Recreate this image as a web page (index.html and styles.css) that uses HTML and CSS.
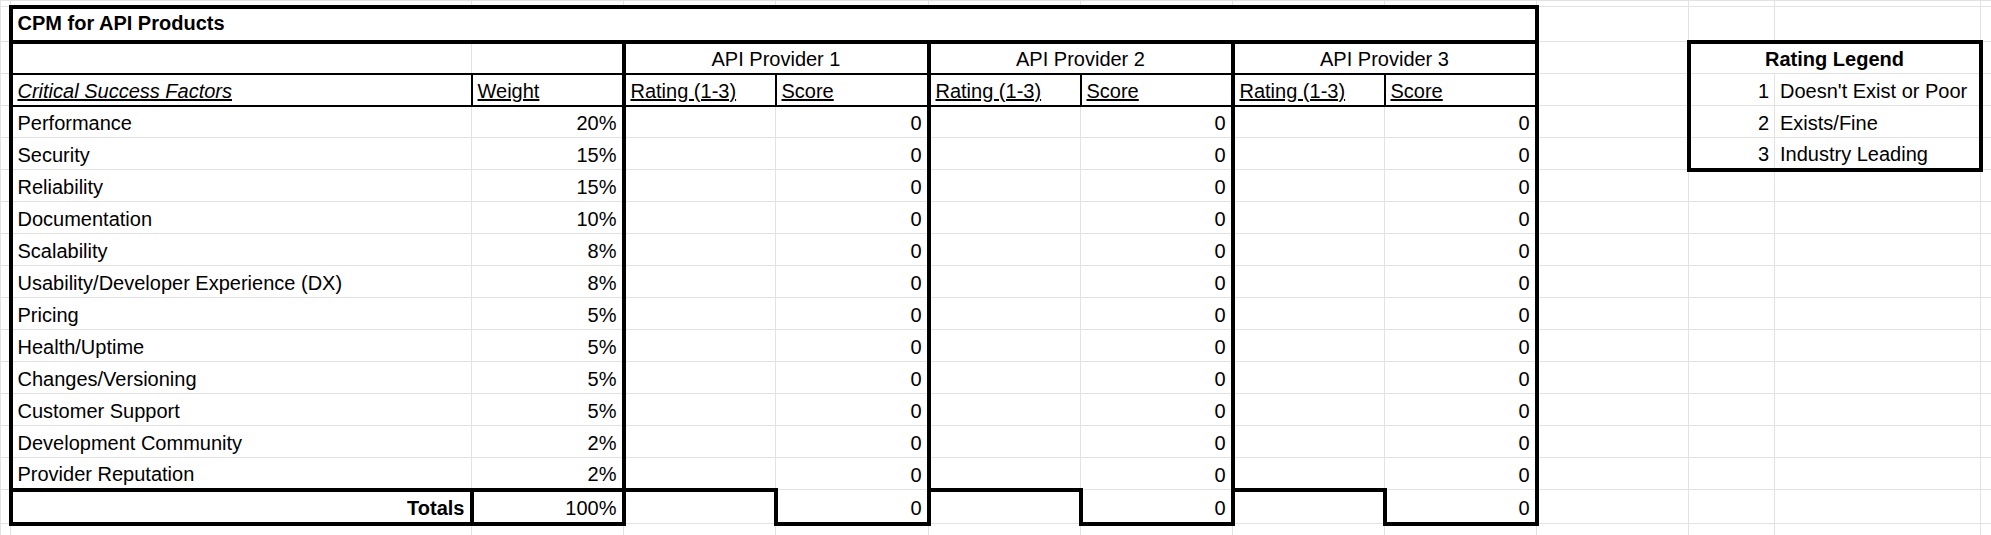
FILE: index.html
```html
<!DOCTYPE html>
<html>
<head>
<meta charset="utf-8">
<title>CPM for API Products</title>
<link rel="stylesheet" href="styles.css">
</head>
<body>
<table class="sheet">
<colgroup>
<col class="w-edge"><col class="w-a"><col class="w-std"><col class="w-std"><col class="w-d"><col class="w-std"><col class="w-std"><col class="w-std"><col class="w-std"><col class="w-std"><col class="w-j"><col class="w-k"><col class="w-last">
</colgroup>
<tbody>
<tr class="row-top"><td></td><td></td><td></td><td></td><td></td><td></td><td></td><td></td><td></td><td></td><td></td><td></td><td></td></tr>
<tr class="row-title"><td></td><td colspan="8" class="title">CPM for API Products</td><td></td><td></td><td></td><td></td></tr>
<tr>
<td></td><td class="tl nb"></td><td class="nb"></td>
<td colspan="2" class="ctr tl tr nb">API Provider 1</td>
<td colspan="2" class="ctr tr nb">API Provider 2</td>
<td colspan="2" class="ctr tr nb">API Provider 3</td>
<td></td>
<td colspan="2" class="ctr bold tt tl tr">Rating Legend</td>
<td></td>
</tr>
<tr>
<td></td>
<td class="tl nr nb"><span class="ul it">Critical Success Factors</span></td>
<td class="tr nb"><span class="ul">Weight</span></td>
<td class="nr nb"><span class="ul">Rating (1-3)</span></td>
<td class="tr nb"><span class="ul">Score</span></td>
<td class="nr nb"><span class="ul">Rating (1-3)</span></td>
<td class="tr nb"><span class="ul">Score</span></td>
<td class="nr nb"><span class="ul">Rating (1-3)</span></td>
<td class="tr nb"><span class="ul">Score</span></td>
<td></td>
<td class="num tl">1</td><td class="tr">Doesn't Exist or Poor</td>
<td></td>
</tr>
<tr><td></td><td class="tl">Performance</td><td class="num tr">20%</td><td></td><td class="num tr">0</td><td></td><td class="num tr">0</td><td></td><td class="num tr">0</td><td></td><td class="num tl">2</td><td class="tr">Exists/Fine</td><td></td></tr>
<tr><td></td><td class="tl">Security</td><td class="num tr">15%</td><td></td><td class="num tr">0</td><td></td><td class="num tr">0</td><td></td><td class="num tr">0</td><td></td><td class="num tl tb">3</td><td class="tr tb">Industry Leading</td><td></td></tr>
<tr><td></td><td class="tl">Reliability</td><td class="num tr">15%</td><td></td><td class="num tr">0</td><td></td><td class="num tr">0</td><td></td><td class="num tr">0</td><td></td><td></td><td></td><td></td></tr>
<tr><td></td><td class="tl">Documentation</td><td class="num tr">10%</td><td></td><td class="num tr">0</td><td></td><td class="num tr">0</td><td></td><td class="num tr">0</td><td></td><td></td><td></td><td></td></tr>
<tr><td></td><td class="tl">Scalability</td><td class="num tr">8%</td><td></td><td class="num tr">0</td><td></td><td class="num tr">0</td><td></td><td class="num tr">0</td><td></td><td></td><td></td><td></td></tr>
<tr><td></td><td class="tl">Usability/Developer Experience (DX)</td><td class="num tr">8%</td><td></td><td class="num tr">0</td><td></td><td class="num tr">0</td><td></td><td class="num tr">0</td><td></td><td></td><td></td><td></td></tr>
<tr><td></td><td class="tl">Pricing</td><td class="num tr">5%</td><td></td><td class="num tr">0</td><td></td><td class="num tr">0</td><td></td><td class="num tr">0</td><td></td><td></td><td></td><td></td></tr>
<tr><td></td><td class="tl">Health/Uptime</td><td class="num tr">5%</td><td></td><td class="num tr">0</td><td></td><td class="num tr">0</td><td></td><td class="num tr">0</td><td></td><td></td><td></td><td></td></tr>
<tr><td></td><td class="tl">Changes/Versioning</td><td class="num tr">5%</td><td></td><td class="num tr">0</td><td></td><td class="num tr">0</td><td></td><td class="num tr">0</td><td></td><td></td><td></td><td></td></tr>
<tr><td></td><td class="tl">Customer Support</td><td class="num tr">5%</td><td></td><td class="num tr">0</td><td></td><td class="num tr">0</td><td></td><td class="num tr">0</td><td></td><td></td><td></td><td></td></tr>
<tr><td></td><td class="tl">Development Community</td><td class="num tr">2%</td><td></td><td class="num tr">0</td><td></td><td class="num tr">0</td><td></td><td class="num tr">0</td><td></td><td></td><td></td><td></td></tr>
<tr><td></td><td class="tl">Provider Reputation</td><td class="num tr">2%</td><td></td><td class="num tr">0</td><td></td><td class="num tr">0</td><td></td><td class="num tr">0</td><td></td><td></td><td></td><td></td></tr>
<tr class="row-total">
<td></td>
<td class="num bold tt tl tr tb">Totals</td>
<td class="num tt tr tb">100%</td>
<td class="tt tr"></td>
<td class="num tr tb">0</td>
<td class="tt tr"></td>
<td class="num tr tb">0</td>
<td class="tt tr"></td>
<td class="num tr tb">0</td>
<td></td><td></td><td></td><td></td>
</tr>
<tr class="row-end"><td></td><td></td><td></td><td></td><td></td><td></td><td></td><td></td><td></td><td></td><td></td><td></td><td></td></tr>
</tbody>
</table>
</body>
</html>
```
FILE: styles.css
```css
html, body {
  margin: 0;
  padding: 0;
  background: #ffffff;
  overflow: hidden;
}
body {
  width: 1991px;
  height: 535px;
}
.sheet {
  border-collapse: collapse;
  table-layout: fixed;
  width: 1991px;
  font-family: "Liberation Sans", Arial, sans-serif;
  font-size: 20px;
  color: #000000;
}
.w-edge { width: 10px; }
.w-a { width: 461px; }
.w-std { width: 152px; }
.w-d { width: 153px; }
.w-j { width: 86px; }
.w-k { width: 206px; }
.w-last { width: 11px; }

.sheet tr { height: 32px; }
.sheet tr.row-top { height: 6px; }
.sheet tr.row-title { height: 35px; }
.sheet tr.row-total { height: 34px; }
.sheet tr.row-end { height: 12px; }

.sheet td {
  border: 1px solid #e2e2e2;
  padding: 0 5px 2px 5px;
  vertical-align: bottom;
  white-space: nowrap;
  overflow: hidden;
  line-height: 23px;
}
.sheet td:first-child { padding: 0; }
.sheet td:last-child { padding: 0; border-right-style: hidden; }
.sheet tr.row-end td { border-bottom-style: hidden; }
.sheet td.title {
  border: 4px solid #000;
  font-weight: bold;
  vertical-align: middle;
}
.ctr { text-align: center; }
.num { text-align: right; }
.bold { font-weight: bold; }
.it { font-style: italic; }
.ul { text-decoration: underline; }

.sheet td.tl { border-left: 4px solid #000; }
.sheet td.tr { border-right: 4px solid #000; }
.sheet td.tt { border-top: 4px solid #000; }
.sheet td.tb { border-bottom: 4px solid #000; }
.sheet td.nr { border-right: 2px solid #000; }
.sheet td.nb { border-bottom: 2px solid #000; }
```
